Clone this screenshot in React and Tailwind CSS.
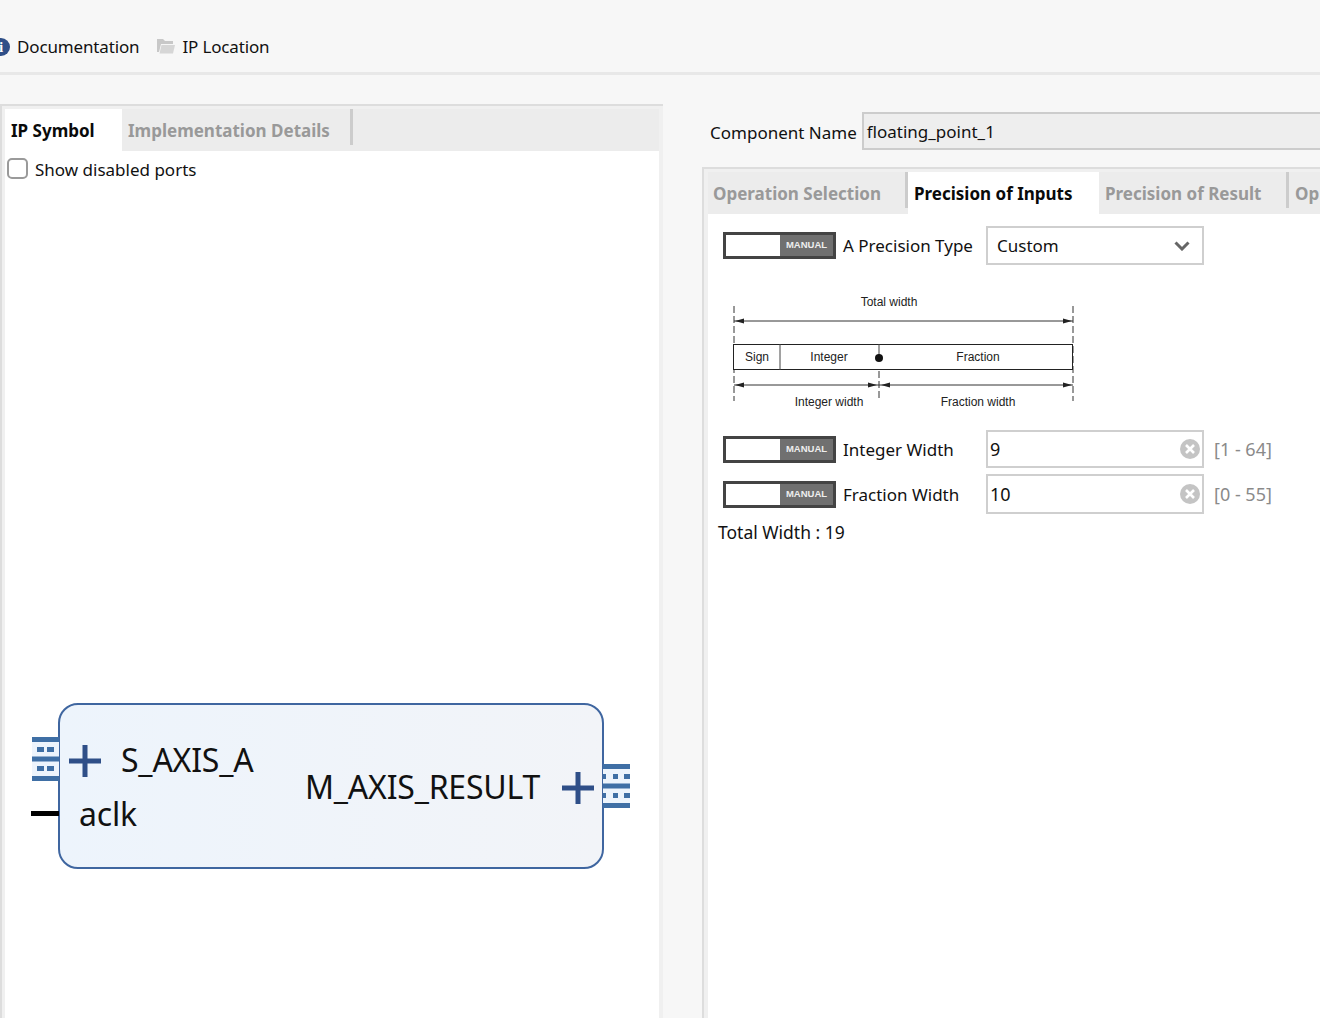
const font = { fontFamily: '"Noto Sans", sans-serif' };

function ManualToggle() {
  return (
    <div className="flex h-[27px] w-[113px] shrink-0 border-[3px] border-[#444444] bg-white">
      <div className="w-[54px]"></div>
      <div className="flex flex-1 items-center justify-center bg-[#707070] text-[9.5px] font-bold text-[#eeeeee] font-['Liberation_Sans',sans-serif]">
        MANUAL
      </div>
    </div>
  );
}

function ClearIcon() {
  return (
    <svg width="20" height="20" viewBox="0 0 20 20" className="shrink-0">
      <circle cx="10" cy="10" r="10" fill="#c4c4c4" />
      <path d="M6 6l8 8M14 6l-8 8" stroke="#ffffff" strokeWidth="2.6" />
    </svg>
  );
}

function WidthRow({ label, value, range, rowClass, inputClass }) {
  return (
    <div className={`flex items-center ${rowClass}`}>
      <ManualToggle />
      <span className="ml-[7px] w-[143px] text-[17px] leading-none text-[#111111]">{label}</span>
      <div className={`flex w-[218px] items-center justify-between border-2 border-[#cfcfcf] bg-white pl-[2px] pr-[2px] text-[18px] text-[#111111] ${inputClass}`}>
        <span>{value}</span>
        <ClearIcon />
      </div>
      <span className="ml-[10px] text-[18px] text-[#8a8a8a]">{range}</span>
    </div>
  );
}

// bus port drawn on the sides of the symbol
function BusPort({ className, right }) {
  return (
    <svg width="27" height="44" viewBox="0 0 27 44" className={`absolute ${className}`}>
      <rect width="27" height="44" fill="#edf4fc" />
      <rect width="27" height="5" fill="#3f6fa5" />
      <rect y="19.500" width="27" height="5" fill="#3f6fa5" />
      <rect y="39" width="27" height="5" fill="#3f6fa5" />
      {right ? (
        <path d="M0 10h3v5H0zM10 10h5v5h-5zM21 10h6v5h-6zM0 29h3v5H0zM10 29h5v5h-5zM21 29h6v5h-6z" fill="#3f6fa5" />
      ) : (
        <path d="M5 10h7v5H5zM15 10h7v5h-7zM5 29h7v5H5zM15 29h7v5h-7z" fill="#3f6fa5" />
      )}
    </svg>
  );
}

function Plus({ className }) {
  return (
    <svg width="32" height="32" viewBox="0 0 32 32" className={`absolute ${className}`}>
      <path d="M0 16h32M16 0v32" stroke="#2f4f88" strokeWidth="5" />
    </svg>
  );
}

function FormatDiagram() {
  const text = { fontFamily: '"Liberation Sans", sans-serif', fontSize: 12, fill: '#222222', textAnchor: 'middle' };
  return (
    <svg width="380" height="130" viewBox="0 0 380 130" className="ml-[-8px] mt-[20px] block">
      <text x="174" y="21" style={text}>Total width</text>
      <path d="M19 21v95M358 21v95M164 86v30" stroke="#333333" strokeDasharray="7 3" fill="none" />
      <path d="M19 36h339M19 100h145M164 100h194" stroke="#333333" />
      <path d="M20 36l9-2.500v5zM357 36l-9-2.500v5zM20 100l9-2.500v5zM162 100l-9-2.500v5zM166 100l9-2.500v5zM357 100l-9-2.500v5z" fill="#222222" />
      <rect x="18.500" y="59.500" width="339" height="25" fill="#ffffff" stroke="#222222" />
      <path d="M65 59v26M164 59v14" stroke="#444444" />
      <circle cx="164" cy="73" r="4" fill="#111111" />
      <text x="42" y="76" style={text}>Sign</text>
      <text x="114" y="76" style={text}>Integer</text>
      <text x="263" y="76" style={text}>Fraction</text>
      <text x="114" y="121" style={text}>Integer width</text>
      <text x="263" y="121" style={text}>Fraction width</text>
    </svg>
  );
}

function TabSeparator() {
  return <div className="h-[36px] w-[3px] shrink-0 self-start bg-[#cccccc]"></div>;
}

export default function App() {
  return (
    <div style={font} className="h-[1018px] w-[1320px] overflow-hidden bg-[#f7f7f7] text-[#111111]">
      {/* Top bar */}
      <div className="flex h-[75px] items-center border-b-[3px] border-[#e8e8e8] pt-[22px] text-[17px] tracking-[-0.15px]">
        <div className="ml-[-8px] flex h-[18px] w-[18px] items-center justify-center rounded-full bg-[#2f4f88] font-['Liberation_Serif',serif] text-[14px] font-bold text-white">
          i
        </div>
        <span className="ml-[7px]">Documentation</span>
        <svg width="18" height="16" viewBox="0 0 18 16" className="ml-[18px] mt-[-2px]">
          <path d="M0 1h6l2 2h8v3H4L2 14H0z" fill="#c8c8c8" />
          <path d="M4.500 7H18l-2 8.500H2.500z" fill="#d6d6d6" />
        </svg>
        <span className="ml-[7px]">IP Location</span>
      </div>

      <div className="flex pt-[29px]">
        {/* Left panel */}
        <div className="h-[914px] w-[663px] shrink-0 border-t-2 border-l-2 border-[#dddddd] bg-[#f0f0f0] pr-[4px] pl-[3px] pt-[3px]">
          <div className="flex h-[42px] bg-[#ececec] text-[17px] font-bold">
            <div className="flex w-[117px] items-center bg-white pl-[6px] pt-[2px] text-[#0a0a0a]">IP Symbol</div>
            <div className="flex w-[228px] items-center pl-[6px] pt-[2px] text-[#999999]">Implementation Details</div>
            <TabSeparator />
          </div>
          <div className="relative h-[867px] bg-white">
            <div className="flex items-center pl-[2px] pt-[7px] text-[17px]">
              <div className="mt-[-4px] h-[21px] w-[21px] rounded-[5px] border-2 border-[#9a9a9a] bg-white"></div>
              <span className="ml-[7px] leading-[24px]">Show disabled ports</span>
            </div>

            {/* IP symbol */}
            <div className="absolute left-[53px] top-[552px] h-[166px] w-[546px] rounded-[20px] border-2 border-[#3f66a0] bg-gradient-to-r from-[#edf4fc] to-[#f2f4f8]">
              <BusPort className="left-[-28px] top-[32px]" />
              <div className="absolute left-[-29px] top-[106px] h-[5px] w-[28px] bg-black"></div>
              <Plus className="left-[9px] top-[40px]" />
              <span className="absolute left-[61px] top-[30px] text-[32px] leading-[50px] tracking-[-0.2px]">S_AXIS_A</span>
              <span className="absolute left-[19px] top-[84px] text-[32px] leading-[50px] tracking-[-0.2px]">aclk</span>
              <span className="absolute left-[245px] top-[57px] text-[32px] leading-[50px] tracking-[-0.2px]">M_AXIS_RESULT</span>
              <Plus className="left-[502px] top-[67px]" />
              <BusPort right className="left-[543px] top-[59px]" />
            </div>
          </div>
        </div>

        {/* Right side */}
        <div className="min-w-0 flex-1 pl-[39px]">
          <div className="flex h-[63px] items-start pt-[8px] text-[17px]">
            <span className="ml-[8px] mt-[8px] leading-[25px]">Component Name</span>
            <div className="ml-[5px] flex h-[38px] flex-1 items-center border-2 border-r-0 border-[#cccccc] bg-[#eeeeee] pl-[3px] pt-[2px]">floating_point_1</div>
          </div>

          <div className="h-[851px] border-t-2 border-l-2 border-[#dddddd] bg-[#f0f0f0] pl-[4px] pt-[3px]">
            <div className="flex h-[42px] bg-[#ececec] text-[17px] font-bold whitespace-nowrap">
              <div className="flex w-[197px] items-center pl-[5px] pt-[2px] text-[#999999]">Operation Selection</div>
              <TabSeparator />
              <div className="flex w-[191px] items-center bg-white pl-[6px] pt-[2px] text-[#0a0a0a]">Precision of Inputs</div>
              <div className="flex w-[187px] items-center pl-[6px] pt-[2px] text-[#999999]">Precision of Result</div>
              <TabSeparator />
              <div className="flex items-center overflow-hidden pl-[6px] pt-[2px] text-[#999999]">Op</div>
            </div>
            <div className="h-[806px] bg-white pl-[15px]">
              <div className="flex items-center pt-[12px]">
                <ManualToggle />
                <span className="ml-[7px] w-[143px] text-[17px] leading-none">A Precision Type</span>
                <div className="flex h-[39px] w-[218px] items-center justify-between border-2 border-[#cfcfcf] bg-white pl-[9px] pr-[12px] text-[17px]">
                  <span>Custom</span>
                  <svg width="16" height="10" viewBox="0 0 16 10">
                    <path d="M1.500 1.500L8 8l6.500-6.500" stroke="#666666" strokeWidth="3" fill="none" />
                  </svg>
                </div>
              </div>

              <FormatDiagram />

              <WidthRow label="Integer Width" value="9" range="[1 - 64]" rowClass="mt-[15px]" inputClass="h-[38px]" />
              <WidthRow label="Fraction Width" value="10" range="[0 - 55]" rowClass="mt-[6px]" inputClass="h-[40px]" />
              <div className="ml-[-5px] mt-[5px] text-[17.500px] leading-[26px]">Total Width : 19</div>
            </div>
          </div>
        </div>
      </div>
    </div>
  );
}
